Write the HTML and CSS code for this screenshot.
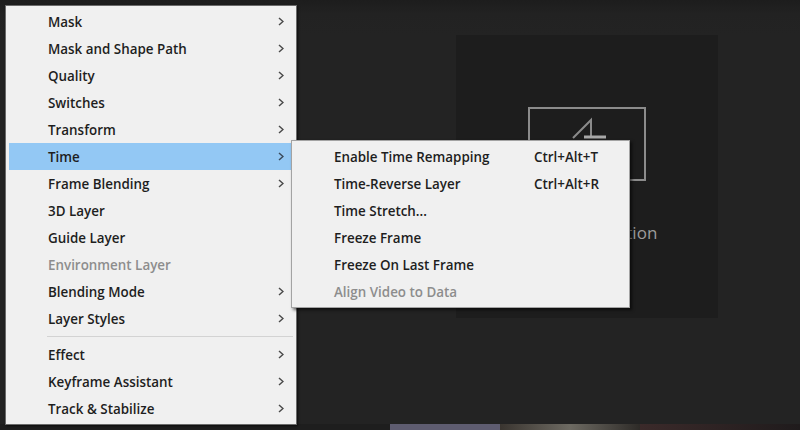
FILE: index.html
```html
<!DOCTYPE html>
<html>
<head>
<meta charset="utf-8">
<link rel="stylesheet" href="styles.css">
</head>
<body>
<div class="app">
  <div class="top"></div>
  <div class="workspace">
    <div class="panel">
      <svg class="comp-icon" width="118" height="74" viewBox="0 0 118 74">
        <rect x="1" y="1" width="116" height="72" fill="none" stroke="#8b8b8b" stroke-width="2"/>
        <path d="M45 31 L63 13 L63 31" fill="none" stroke="#8b8b8b" stroke-width="2"/>
        <path d="M56 30 L78 30" stroke="#a8a8a8" stroke-width="3"/>
      </svg>
      <div class="panel-label">New Composition</div>
    </div>
  </div>
  <div class="strip">
    <span class="s1"></span><span class="s2"></span><span class="s3"></span><span class="s4"></span>
  </div>

  <div class="menu main-menu">
    <div class="item"><span class="label">Mask</span><svg class="chev" width="6" height="9" viewBox="0 0 6 9"><polyline points="1,1 5,4.5 1,8" fill="none" stroke="#4a4a4a" stroke-width="1.5"/></svg></div>
    <div class="item"><span class="label">Mask and Shape Path</span><svg class="chev" width="6" height="9" viewBox="0 0 6 9"><polyline points="1,1 5,4.5 1,8" fill="none" stroke="#4a4a4a" stroke-width="1.5"/></svg></div>
    <div class="item"><span class="label">Quality</span><svg class="chev" width="6" height="9" viewBox="0 0 6 9"><polyline points="1,1 5,4.5 1,8" fill="none" stroke="#4a4a4a" stroke-width="1.5"/></svg></div>
    <div class="item"><span class="label">Switches</span><svg class="chev" width="6" height="9" viewBox="0 0 6 9"><polyline points="1,1 5,4.5 1,8" fill="none" stroke="#4a4a4a" stroke-width="1.5"/></svg></div>
    <div class="item"><span class="label">Transform</span><svg class="chev" width="6" height="9" viewBox="0 0 6 9"><polyline points="1,1 5,4.5 1,8" fill="none" stroke="#4a4a4a" stroke-width="1.5"/></svg></div>
    <div class="item active"><span class="label">Time</span><svg class="chev" width="6" height="9" viewBox="0 0 6 9"><polyline points="1,1 5,4.5 1,8" fill="none" stroke="#3a4a5a" stroke-width="1.5"/></svg></div>
    <div class="item"><span class="label">Frame Blending</span><svg class="chev" width="6" height="9" viewBox="0 0 6 9"><polyline points="1,1 5,4.5 1,8" fill="none" stroke="#4a4a4a" stroke-width="1.5"/></svg></div>
    <div class="item"><span class="label">3D Layer</span></div>
    <div class="item"><span class="label">Guide Layer</span></div>
    <div class="item disabled"><span class="label">Environment Layer</span></div>
    <div class="item"><span class="label">Blending Mode</span><svg class="chev" width="6" height="9" viewBox="0 0 6 9"><polyline points="1,1 5,4.5 1,8" fill="none" stroke="#4a4a4a" stroke-width="1.5"/></svg></div>
    <div class="item"><span class="label">Layer Styles</span><svg class="chev" width="6" height="9" viewBox="0 0 6 9"><polyline points="1,1 5,4.5 1,8" fill="none" stroke="#4a4a4a" stroke-width="1.5"/></svg></div>
    <div class="sep"></div>
    <div class="item"><span class="label">Effect</span><svg class="chev" width="6" height="9" viewBox="0 0 6 9"><polyline points="1,1 5,4.5 1,8" fill="none" stroke="#4a4a4a" stroke-width="1.5"/></svg></div>
    <div class="item"><span class="label">Keyframe Assistant</span><svg class="chev" width="6" height="9" viewBox="0 0 6 9"><polyline points="1,1 5,4.5 1,8" fill="none" stroke="#4a4a4a" stroke-width="1.5"/></svg></div>
    <div class="item"><span class="label">Track &amp; Stabilize</span><svg class="chev" width="6" height="9" viewBox="0 0 6 9"><polyline points="1,1 5,4.5 1,8" fill="none" stroke="#4a4a4a" stroke-width="1.5"/></svg></div>
  </div>

  <div class="menu sub-menu">
    <div class="item"><span class="label">Enable Time Remapping</span><span class="key">Ctrl+Alt+T</span></div>
    <div class="item"><span class="label">Time-Reverse Layer</span><span class="key">Ctrl+Alt+R</span></div>
    <div class="item"><span class="label">Time Stretch...</span></div>
    <div class="item"><span class="label">Freeze Frame</span></div>
    <div class="item"><span class="label">Freeze On Last Frame</span></div>
    <div class="item disabled"><span class="label">Align Video to Data</span></div>
  </div>
</div>
</body>
</html>
```

FILE: styles.css
```css
* { box-sizing: border-box; }
html, body { margin: 0; padding: 0; }
body {
  background: #232323;
  font-family: "Open Sans", "Noto Sans", sans-serif;
}
.app {
  position: relative;
  width: 800px;
  height: 430px;
  overflow: hidden;
  background: #232323;
  display: flex;
  flex-direction: column;
}
.top {
  height: 35px;
  flex: none;
  background: linear-gradient(#1d1d1d, #222 40%, #232323);
}
.workspace {
  flex: 1;
  display: flex;
  padding-left: 456px;
}
.panel {
  width: 262px;
  height: 283px;
  background: #1d1d1d;
  display: flex;
  flex-direction: column;
  align-items: center;
  padding-top: 72px;
}
.comp-icon { display: block; }
.panel-label {
  margin-top: 42px;
  color: #9c9c9c;
  font-size: 17px;
  line-height: 20px;
  font-family: "Open Sans", sans-serif;
}
.strip {
  height: 6px;
  flex: none;
  display: flex;
}
.strip span { display: block; height: 100%; }
.strip .s1 { width: 390px; background: #1e1e1e; }
.strip .s2 { width: 110px; background: #5e5c70; }
.strip .s3 { width: 140px; background: linear-gradient(90deg, #3a3530, #6d6a62, #2e2b28); }
.strip .s4 { flex: 1; background: linear-gradient(90deg, #3b2a2a, #1f1b1c); }

.menu {
  position: absolute;
  background: #f0f0f0;
  padding: 2px 3px;
  color: #1e1e1e;
  font-size: 13.4px;
  font-weight: 600;
}
.main-menu {
  left: 5px;
  top: 5px;
  width: 292px;
  height: 420px;
  border: 1px solid #6a6a6a;
  box-shadow: 1px 1px 2px rgba(0,0,0,0.6);
}
.sub-menu {
  left: 291px;
  top: 140px;
  width: 339px;
  height: 168px;
  border: 1px solid #a3a3a3;
  box-shadow: 2px 2px 3px rgba(0,0,0,0.6);
}
.item {
  height: 27px;
  display: flex;
  align-items: center;
  padding-left: 39px;
  padding-right: 9px;
  white-space: nowrap;
}
.item .label { flex: 1; }
.item.active { background: #93c8f4; }
.item.disabled { color: #8d8d8d; }
.chev { display: block; flex: none; }
.sep {
  height: 9px;
  display: flex;
  align-items: center;
  padding-left: 38px;
}
.sep::after {
  content: "";
  display: block;
  width: 100%;
  height: 1px;
  background: #d3d3d3;
}
.sub-menu .item .label { flex: none; width: 200px; }
.key { flex: none; }
```
